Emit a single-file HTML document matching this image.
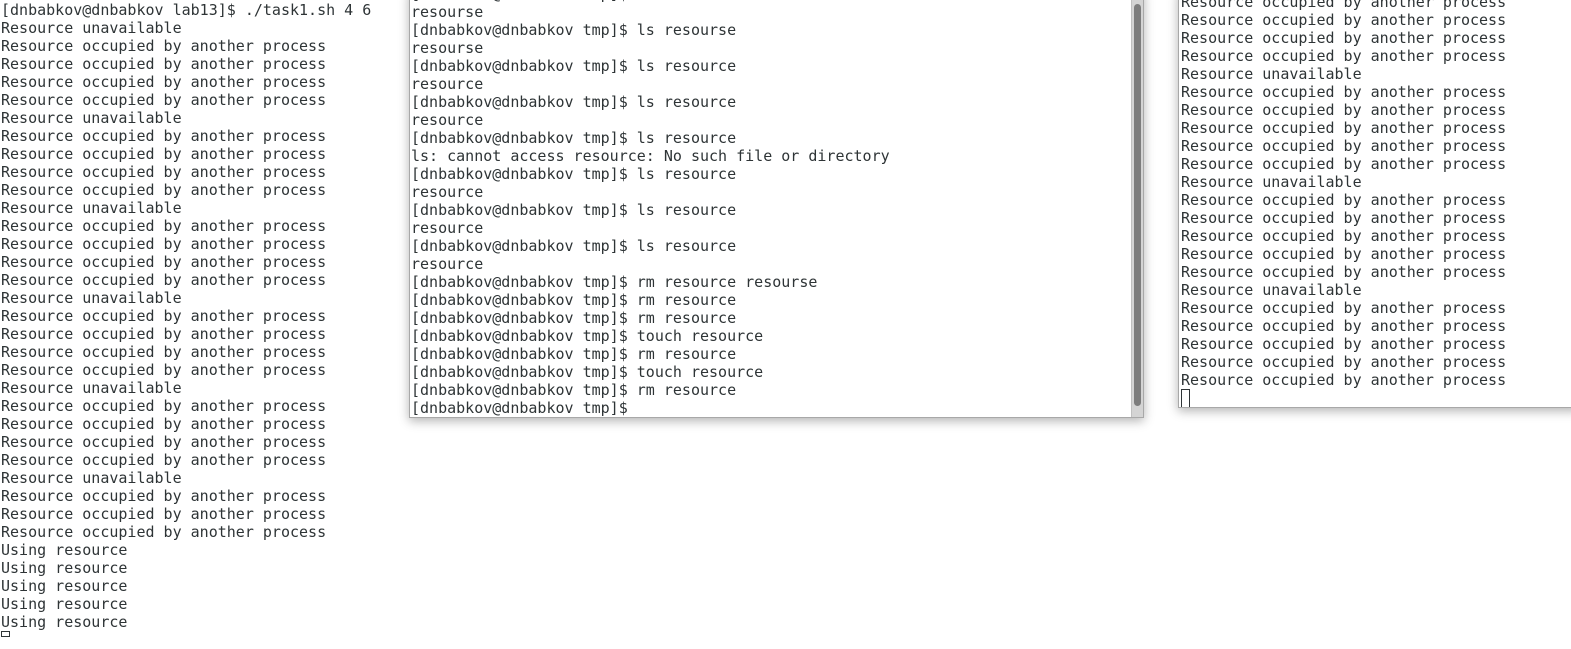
<!DOCTYPE html>
<html><head><meta charset="utf-8"><style>
html,body{margin:0;padding:0;width:1571px;height:632px;overflow:hidden;background:#fff}
pre{margin:0;font-family:"DejaVu Sans Mono","Liberation Mono",monospace;font-size:15px;line-height:18px;color:#2e3436;white-space:pre}
#l{position:absolute;left:1px;top:1px}
#m{position:absolute;left:409px;top:-10px;width:733px;height:427px;background:#fff;border:1px solid #a8a8a8;border-top:none;box-shadow:0 3px 10px rgba(0,0,0,.3);overflow:hidden}
#m pre{position:absolute;left:1px;top:-5px}
#sb{position:absolute;right:0;top:0;width:11px;height:100%;background:#d4d4d4;border-left:1px solid #c0c0c0}
#th{position:absolute;left:2px;top:14px;width:7px;height:402px;background:#7d7d7d;border-radius:4px}
#r{position:absolute;left:1178px;top:-10px;width:400px;height:417px;background:#fff;border:1px solid #a8a8a8;border-top:none;box-shadow:0 3px 10px rgba(0,0,0,.3);overflow:hidden}
#r pre{position:absolute;left:2px;top:3px}
.cur{display:inline-block;width:9px;height:16px;border:1px solid #2e3436;box-sizing:border-box;vertical-align:-4px}
</style></head><body>
<pre id="l">[dnbabkov@dnbabkov lab13]$ ./task1.sh 4 6
Resource unavailable
Resource occupied by another process
Resource occupied by another process
Resource occupied by another process
Resource occupied by another process
Resource unavailable
Resource occupied by another process
Resource occupied by another process
Resource occupied by another process
Resource occupied by another process
Resource unavailable
Resource occupied by another process
Resource occupied by another process
Resource occupied by another process
Resource occupied by another process
Resource unavailable
Resource occupied by another process
Resource occupied by another process
Resource occupied by another process
Resource occupied by another process
Resource unavailable
Resource occupied by another process
Resource occupied by another process
Resource occupied by another process
Resource occupied by another process
Resource unavailable
Resource occupied by another process
Resource occupied by another process
Resource occupied by another process
Using resource
Using resource
Using resource
Using resource
Using resource
<span class="cur" style="height:6px;vertical-align:top"></span></pre>
<div id="m"><pre>[dnbabkov@dnbabkov tmp]$ ls resourse
resourse
[dnbabkov@dnbabkov tmp]$ ls resourse
resourse
[dnbabkov@dnbabkov tmp]$ ls resource
resource
[dnbabkov@dnbabkov tmp]$ ls resource
resource
[dnbabkov@dnbabkov tmp]$ ls resource
ls: cannot access resource: No such file or directory
[dnbabkov@dnbabkov tmp]$ ls resource
resource
[dnbabkov@dnbabkov tmp]$ ls resource
resource
[dnbabkov@dnbabkov tmp]$ ls resource
resource
[dnbabkov@dnbabkov tmp]$ rm resource resourse
[dnbabkov@dnbabkov tmp]$ rm resource
[dnbabkov@dnbabkov tmp]$ rm resource
[dnbabkov@dnbabkov tmp]$ touch resource
[dnbabkov@dnbabkov tmp]$ rm resource
[dnbabkov@dnbabkov tmp]$ touch resource
[dnbabkov@dnbabkov tmp]$ rm resource
[dnbabkov@dnbabkov tmp]$ </pre><div id="sb"><div id="th"></div></div></div>
<div id="r"><pre>Resource occupied by another process
Resource occupied by another process
Resource occupied by another process
Resource occupied by another process
Resource unavailable
Resource occupied by another process
Resource occupied by another process
Resource occupied by another process
Resource occupied by another process
Resource occupied by another process
Resource unavailable
Resource occupied by another process
Resource occupied by another process
Resource occupied by another process
Resource occupied by another process
Resource occupied by another process
Resource unavailable
Resource occupied by another process
Resource occupied by another process
Resource occupied by another process
Resource occupied by another process
Resource occupied by another process
<span class="cur" style="height:19px"></span></pre></div>
</body></html>
